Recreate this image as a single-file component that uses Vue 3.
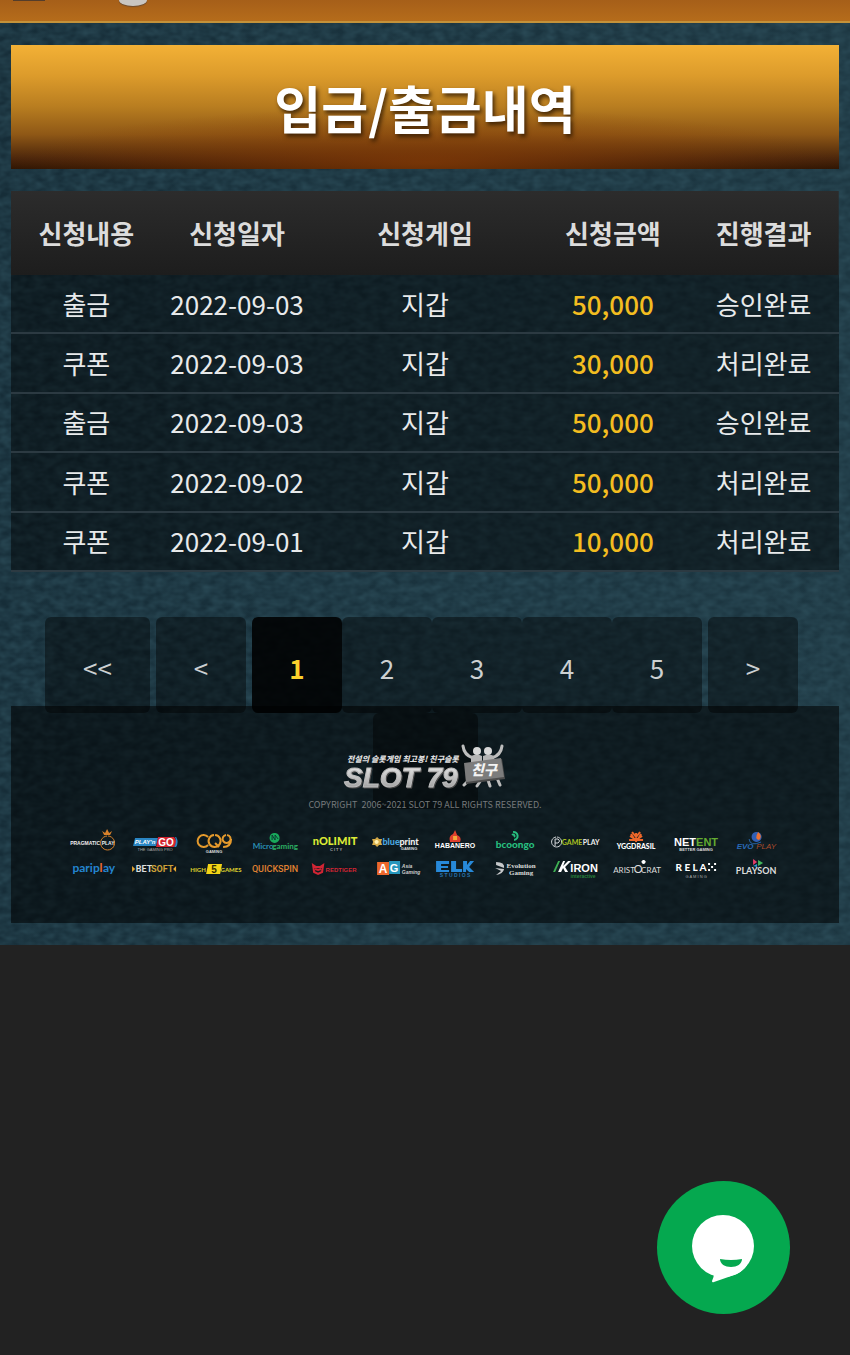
<script setup>
import { ref } from 'vue'

const columns = ['신청내용', '신청일자', '신청게임', '신청금액', '진행결과']
const rows = [
  ['출금', '2022-09-03', '지갑', '50,000', '승인완료'],
  ['쿠폰', '2022-09-03', '지갑', '30,000', '처리완료'],
  ['출금', '2022-09-03', '지갑', '50,000', '승인완료'],
  ['쿠폰', '2022-09-02', '지갑', '50,000', '처리완료'],
  ['쿠폰', '2022-09-01', '지갑', '10,000', '처리완료'],
]
const pages = ['1', '2', '3', '4', '5']
const current = ref('1')

const SANS = 'Liberation Sans'
const ROUND = 'Lato'
// text: [content, x, y, size, colour, family, weight, style]
// shape: [path, fill, stroke, stroke width]
const providers = [
  { name: 'Pragmatic Play',
    shapes: [['M44 7a7 7 0 1 1-1 0', 'none', '#d9822b', 1], ['M40 6l-2-4 3 2 2-4 2 4 3-2-2 4z', '#d9822b']],
    texts: [['PRAGMATIC', 21, 16, 5, '#eee', SANS, 700], ['PLAY', 44, 16, 5, '#eee', SANS, 700]] },
  { name: "Play'n GO",
    shapes: [['M11 9H34L32 17H9z', '#2a86c4'], ['M34 8H50Q54 13 50 18H32z', '#d3222e'], ['M51 8h1q3 5 0 10h-2q3-5 1-10', '#2a86c4']],
    texts: [["PLAY'n", 21, 15, 6, '#fff', SANS, 700, 'italic'], ['GO', 42, 17, 10, '#fff', SANS, 700], ['THE GAMING PRO', 31, 22, 4, '#aaa', SANS, 400]] },
  { name: 'CQ9 Gaming',
    shapes: [['M24 8A6 6 0 1 0 24 16M30 6a6 6 0 1 0 1 0M31 14l4 4M42 6a4 4 0 1 0 1 0M47 10q0 8-8 8', 'none', '#e59a2c', 2]],
    texts: [['GAMING', 30, 24, 4, '#ddd', SANS, 700]] },
  { name: 'Microgaming',
    shapes: [['M30 4a5 5 0 1 1-1 0', '#18a95b'], ['M27 11V6l3 5V6l3 4', 'none', '#0c3b33', 1]],
    texts: [['Micro', 18, 20, 8, '#2a8fb5', ROUND, 700], ['gaming', 40, 20, 8, '#2bae62', ROUND, 700]] },
  { name: 'Nolimit City', shapes: [],
    texts: [['nOLIMIT', 30, 16, 11, '#dcea35', ROUND, 900], ['C  I  T  Y', 31, 22, 4, '#aaa', SANS, 700]] },
  { name: 'Blueprint Gaming',
    shapes: [['M12 8l2 2 3 0-1 3 1 3-3 0-2 2-2-2-3 0 1-3-1-3 3 0z', '#d7ac49'], ['M12 11a2 2 0 1 1-1 0', '#fff0b0']],
    texts: [['blue', 26, 16, 9, '#4aa5df', ROUND, 900], ['print', 44, 16, 9, '#eee', ROUND, 900], ['GAMING', 44, 21, 4, '#ddd', SANS, 700]] },
  { name: 'Habanero',
    shapes: [['M25 13q-2-6 3-8l2-4 2 5q5 2 3 7z', '#df402e'], ['M28 7h4v4h-4z', '#f4a83b']],
    texts: [['HABANERO', 30, 19, 7, '#fff', SANS, 700]] },
  { name: 'Booongo',
    shapes: [['M28 3a4 4 0 0 1 1 8M27 6a1 1 0 0 1 2 2', 'none', '#27be7f', 2]],
    texts: [['bcoongo', 30, 19, 10, '#27be7f', ROUND, 900]] },
  { name: 'Gameplay',
    shapes: [['M12 8a5 5 0 1 1-1 0M10 17v-7h3q3 2 0 4h-3', 'none', '#d6dadd', 1]],
    texts: [['GAME', 27, 16, 7, '#aac322', ROUND, 700], ['PLAY', 46, 16, 7, '#eee', ROUND, 700]] },
  { name: 'Yggdrasil',
    shapes: [['M30 13V4M30 11L24 7M30 11l6-4M26 3l4 5 4-5M23 11h14M25 5l3 5M35 5l-3 5', 'none', '#ed672a', 2]],
    texts: [['YGGDRASIL', 30, 20, 7, '#fff', ROUND, 900]] },
  { name: 'NetEnt', shapes: [],
    texts: [['NET', 19, 17, 11, '#fff', SANS, 700], ['ENT', 41, 17, 11, '#63ab31', SANS, 700], ['BETTER GAMING', 30, 22, 4, '#ddd', SANS, 700]] },
  { name: 'Evoplay',
    shapes: [['M31 3a5 5 0 1 1-1 0', '#315fb5'], ['M32 3q5 4 1 8-5-1-1-8', '#ed7131'], ['M23 10q1 8 12 3', 'none', '#2563a7', 1]],
    texts: [['EVO', 19, 20, 8, '#2869b5', SANS, 700, 'italic'], ['PLAY', 40, 20, 8, '#a84b2b', SANS, 400, 'italic']] },
  { name: 'Pariplay', shapes: [],
    texts: [['parip', 22, 16, 12, '#2485d0', ROUND, 700], ['l', 37, 16, 12, '#ef6b35', ROUND, 700], ['ay', 45, 16, 12, '#2485d0', ROUND, 700]] },
  { name: 'Betsoft', shapes: [['M8 10l3 3-3 3zM52 10l-3 3 3 3z', '#e8a832']],
    texts: [['BET', 20, 16, 9, '#ddd', 'Roboto', 700], ['SOFT', 38, 16, 9, '#cda137', 'Roboto', 700]] },
  { name: 'High 5 Games', shapes: [['M24 8H38L36 18H22z', '#f3d416']],
    texts: [['HIGH', 14, 16, 6, '#d5c82d', ROUND, 900], ['5', 30, 17, 10, '#352e00', SANS, 700], ['GAMES', 47, 16, 6, '#d5c82d', ROUND, 900]] },
  { name: 'Quickspin', shapes: [],
    texts: [['QUICKSPIN', 30, 16, 9, '#e08131', 'Roboto', 500]] },
  { name: 'Red Tiger', shapes: [['M8 9l3 2h4l3-2-1 7-4 2-4-2zM10 13l3 1 3-1', 'none', '#d22534', 2]],
    texts: [['REDTIGER', 36, 16, 6, '#d22534', SANS, 700]] },
  { name: 'Asia Gaming', shapes: [['M12 6H24V19H12z', '#ed672c'], ['M24 5H35V18H24z', '#2697bd']],
    texts: [['A', 18, 17, 12, '#fff', SANS, 700], ['G', 29, 16, 11, '#fff', SANS, 700], ['Asia', 42, 12, 5, '#ccc', SANS, 700, 'italic'], ['Gaming', 46, 18, 5, '#ccc', SANS, 700, 'italic']] },
  { name: 'ELK Studios', shapes: [['M11 5H24V8H16V10H23V12H16V14H24V16H11zM26 5h5v8h6v3H26zM38 5h4v4l3-4h4l-5 6 5 5h-5l-3-3v3h-3z', '#2789d9']],
    texts: [['S T U D I O S', 30, 21, 5, '#2774ae', SANS, 700]] },
  { name: 'Evolution Gaming', shapes: [['M11 6q9 0 8 6l-8-3zM10 12l9 1q-1 5-8 6l5-4z', '#c6c8ca']],
    texts: [['Evolution', 36, 12, 7, '#ddd', 'Liberation Serif', 700], ['Gaming', 36, 19, 7, '#ddd', 'Liberation Serif', 700]] },
  { name: 'Kiron Interactive', shapes: [['M8 16L13 5h2L10 16z', '#3eb153'], ['M13 16L18 5h2l-2 5 5-5h3l-6 6 3 5h-3l-2-4-2 4z', '#fff']],
    texts: [['IRON', 39, 16, 11, '#fff', SANS, 700], ['interactive', 38, 22, 5, '#28813c', SANS, 700]] },
  { name: 'Aristocrat', shapes: [['M38 4a2 2 0 1 1-1 0', '#fff']],
    texts: [['ARIST', 18, 17, 8, '#ddd', ROUND, 400], ['O', 32, 17, 11, '#ddd', ROUND, 400], ['CRAT', 45, 17, 8, '#ddd', ROUND, 400]] },
  { name: 'Relax Gaming', shapes: [['M42 7h2v2h-2zM48 7h2v2h-2zM45 10h2v2h-2zM42 13h2v2h-2zM48 13h2v2h-2z', '#fff']],
    texts: [['R E L A', 25, 15, 10, '#fff', ROUND, 900], ['G  A  M  I  N  G', 30, 22, 4, '#aaa', SANS, 400]] },
  { name: 'Playson', shapes: [['M27 3l4 3-4 3z', '#e53c6a'], ['M32 4l5 3-5 3z', '#43b65d'], ['M27 10l4-2v3z', '#2b9ad5']],
    texts: [['PLAYSON', 30, 18, 9, '#ddd', ROUND, 700]] },
]
</script>

<template>
  <div class="page">
    <div class="stage">
      <svg class="texture" aria-hidden="true">
        <filter id="grain" x="0" y="0" width="100%" height="100%" color-interpolation-filters="sRGB">
          <feTurbulence type="fractalNoise" baseFrequency="0.09 0.14" numOctaves="2" seed="8" />
          <feColorMatrix values="0 0 0 0 0.2  0 0 0 0 0.34  0 0 0 0 0.39  0.9 0 0 0 -0.2" />
        </filter>
        <rect width="100%" height="100%" filter="url(#grain)" />
      </svg>

      <header class="topbar">
        <span class="menu-edge"></span>
        <span class="logo-edge"></span>
      </header>

      <main class="content">
        <h1 class="title">입금/출금내역</h1>

        <table class="history">
          <thead>
            <tr><th v-for="c in columns" :key="c" scope="col">{{ c }}</th></tr>
          </thead>
          <tbody>
            <tr v-for="(row, i) in rows" :key="i">
              <td v-for="(cell, j) in row" :key="j" :class="{ amount: j === 3 }">{{ cell }}</td>
            </tr>
          </tbody>
        </table>

        <nav class="pager" aria-label="페이지">
          <button class="wide" type="button">&lt;&lt;</button>
          <button type="button">&lt;</button>
          <div class="numbers">
            <button v-for="p in pages" :key="p" type="button" :class="{ active: p === current }" @click="current = p">{{ p }}</button>
          </div>
          <button type="button">&gt;</button>
          <button class="wide last" type="button" aria-label="마지막 페이지"></button>
        </nav>

        <footer class="footer">
          <svg class="brand" viewBox="0 0 164 50" role="img" aria-label="SLOT 79 친구">
            <defs>
              <linearGradient id="silver" x1="0" y1="0" x2="0" y2="1">
                <stop offset="0" stop-color="#f2f2f2" />
                <stop offset="1" stop-color="#929292" />
              </linearGradient>
            </defs>
            <text class="tagline" x="4" y="20">전설의 슬롯게임 최고봉! 친구슬롯</text>
            <text class="wordmark" x="1" y="45">SLOT 79</text>
            <g fill="none" stroke="#bdbdbd" stroke-width="3" stroke-linecap="round">
              <path d="M120 4q1 9 10 12M159 4q-1 9-10 12M126 38l-5 5M138 38l-4 6M145 38l2 6M154 36l3 7" />
            </g>
            <path d="M128 14q6-3 11 0v10h-11zM140 14q6-3 11 0v10h-11z" fill="#b5b5b5" />
            <circle cx="134" cy="9" r="4" fill="#d8d8d8" />
            <circle cx="145" cy="9" r="4" fill="#d8d8d8" />
            <path d="M122 22l37-5 3 20-39 5z" fill="#4c4c4c" />
            <path d="M121 21l37-5 3 19-38 5z" fill="#7c7c7c" />
            <text class="badge" x="141" y="33">친구</text>
          </svg>
          <p class="copyright">COPYRIGHT&nbsp; 2006~2021 SLOT 79 ALL RIGHTS RESERVED.</p>
          <ul class="providers">
            <li v-for="p in providers" :key="p.name">
              <svg viewBox="0 0 60 26" role="img" :aria-label="p.name">
                <path v-for="(s, i) in p.shapes" :key="'s' + i" :d="s[0]" :fill="s[1]" :stroke="s[2]" :stroke-width="s[3]" />
                <text v-for="(t, i) in p.texts" :key="'t' + i" :x="t[1]" :y="t[2]" :font-size="t[3]" :fill="t[4]" :font-family="t[5]" :font-weight="t[6]" :font-style="t[7]" text-anchor="middle">{{ t[0] }}</text>
              </svg>
            </li>
          </ul>
        </footer>
      </main>
    </div>

    <button class="chat" type="button" aria-label="채팅">
      <svg viewBox="0 0 133 133" aria-hidden="true">
        <circle cx="66" cy="65" r="31" fill="#fff" />
        <path d="M57 92q0 4-2 8q0 2 2 1L80 93Q86 90 90 84L60 84z" fill="#fff" />
        <path d="M63 78q11 2 22 0c0 5-5 8-11 8s-11-3-11-8z" fill="#05a84f" />
      </svg>
    </button>
  </div>
</template>

<style>
body {
  margin: 0;
  background: #222;
}
</style>

<style scoped>
.page {
  min-height: 100vh;
  background: #222;
  font-family: "Noto Sans CJK KR", sans-serif;
}
.stage {
  position: relative;
  background: linear-gradient(90deg, #162d38, #1a333e 50%, #1d3742);
}
.texture {
  position: absolute;
  inset: 0;
  width: 100%;
  height: 100%;
}
.topbar {
  position: relative;
  display: flex;
  align-items: flex-start;
  gap: 74px;
  box-sizing: border-box;
  height: 23px;
  padding-left: 13px;
  overflow: hidden;
  background: linear-gradient(#a65f19, #b56c1b);
  border-bottom: 2px solid #c4923a;
}
.menu-edge {
  width: 32px;
  height: 1px;
  background: #553d2a;
}
.logo-edge {
  width: 28px;
  height: 6px;
  border-radius: 0 0 14px 14px / 0 0 6px 6px;
  background: #c9c6c2;
  box-shadow: 0 1px 1px #6c4c30;
}
.content {
  position: relative;
  padding: 22px 11px;
}
.title {
  margin: 0 0 22px;
  height: 124px;
  line-height: 124px;
  text-align: center;
  font-size: 51px;
  font-weight: 700;
  color: #fff;
  text-shadow: 2px 3px 4px rgba(40, 20, 0, 0.8);
  background:
    radial-gradient(ellipse 50% 45% at 50% 95%, rgba(136, 60, 6, 0.75), rgba(136, 60, 6, 0)),
    linear-gradient(#f3b136, #dc9b2b 25%, #b87d20 50%, #8f5816 72%, #4a250b 92%, #301603);
}
.history {
  width: 100%;
  height: 381px;
  table-layout: fixed;
  border-collapse: separate;
  border-spacing: 0;
  text-align: center;
  color: #e8eaeb;
}
.history th {
  width: 18.2%;
  height: 84px;
  box-sizing: border-box;
  padding: 0 0 2px;
  font-size: 26px;
  font-weight: 700;
  color: #dcdcdc;
}
.history th:nth-child(3) {
  width: 27.2%;
}
.history thead {
  background: linear-gradient(#2c2c2c, #1d1d1d);
}
.history td {
  box-sizing: border-box;
  height: 59px;
  padding: 0;
  font-size: 26px;
  line-height: 40px;
  background: rgba(0, 0, 0, 0.45);
  border-bottom: 2px solid #2c3a42;
}
.history .amount {
  color: #f3bd20;
  font-weight: 500;
}
.pager {
  display: flex;
  flex-wrap: wrap;
  justify-content: center;
  column-gap: 6px;
  padding: 45px 32px 0 25px;
}
.numbers {
  display: flex;
}
.pager button {
  width: 90px;
  height: 96px;
  padding: 4px 0 0;
  border: 0;
  border-radius: 6px;
  background: rgba(0, 0, 0, 0.42);
  color: #ccd0d2;
  font: 400 26px "Noto Sans CJK KR", sans-serif;
}
.pager .wide {
  width: 105px;
}
.pager .last {
  margin-left: 7px;
}
.pager .active {
  background: rgba(0, 0, 0, 0.87);
  color: #fad02c;
  font-weight: 700;
}
.footer {
  position: relative;
  display: flex;
  flex-direction: column;
  align-items: center;
  box-sizing: border-box;
  min-height: 217px;
  margin-top: -103px;
  padding-top: 36px;
  background: rgba(0, 0, 0, 0.54);
}
.brand {
  width: 164px;
  height: 50px;
}
.tagline {
  font: italic 900 8px "Noto Sans CJK KR", sans-serif;
  fill: #ddd;
}
.wordmark {
  font: italic 700 28px "Liberation Sans", sans-serif;
  fill: url(#silver);
  stroke: #bcbcbc;
  stroke-width: 1px;
  filter: drop-shadow(1px 1px 0 #4a4a4a);
}
.badge {
  font: italic 900 14px "Noto Sans CJK KR", sans-serif;
  fill: #f3f3f3;
  text-anchor: middle;
}
.copyright {
  margin: 6px 0 18px;
  font-family: "Noto Sans CJK KR", sans-serif;
  font-size: 9px;
  line-height: 13px;
  color: #75797b;
}
.providers {
  display: grid;
  grid-template-columns: repeat(12, 1fr);
  row-gap: 1px;
  width: 100%;
  max-width: 722px;
  margin: 0;
  padding: 0;
  list-style: none;
}
.providers svg {
  display: block;
  width: 100%;
  height: 26px;
  overflow: visible;
}
.chat {
  position: fixed;
  right: 60px;
  bottom: 41px;
  width: 133px;
  height: 133px;
  padding: 0;
  border: 0;
  border-radius: 50%;
  background: #05a84f;
}
.chat svg {
  display: block;
  width: 100%;
}
</style>
